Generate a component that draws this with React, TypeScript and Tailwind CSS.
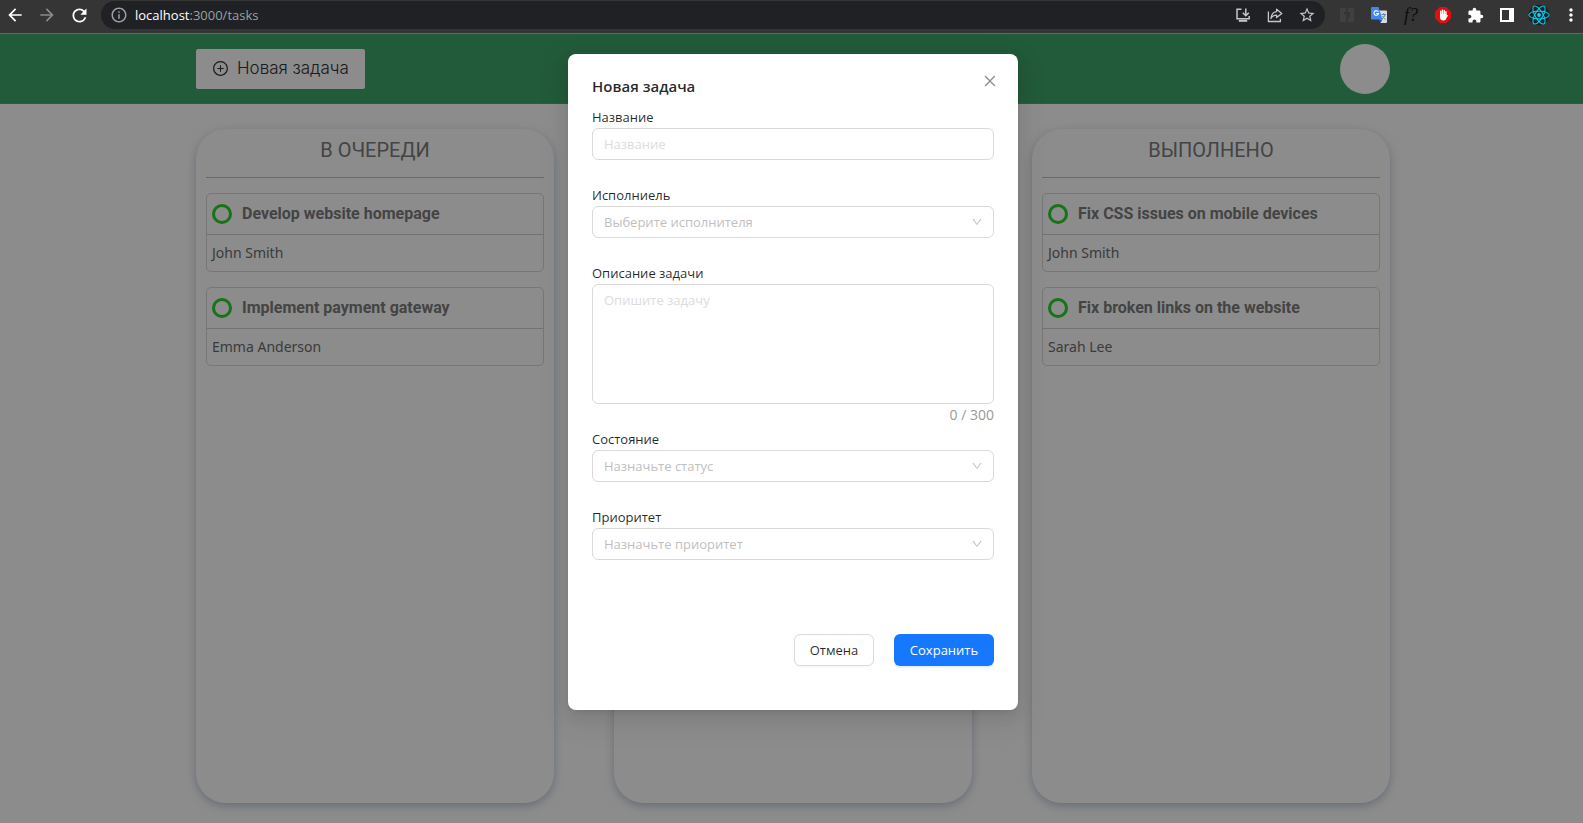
import type { ReactNode } from "react";
import { AiOutlineClose, AiOutlineDown, AiOutlinePlusCircle } from "react-icons/ai";
import { MdArrowBack, MdArrowForward, MdExtension, MdMoreVert, MdOutlineInfo, MdRefresh, MdStarBorder } from "react-icons/md";

function BarIcon({ label, children }: { label: string; children: ReactNode }) {
  return (
    <button type="button" aria-label={label} className="flex h-8 w-8 shrink-0 items-center justify-center">
      {children}
    </button>
  );
}

function InstallIcon() {
  return (
    <svg width="16" height="16" viewBox="0 0 16 16" fill="none" stroke="currentColor" strokeWidth="1.5">
      <path d="M6.500 2.200H2v9.600h12.200V9" />
      <path d="M3.800 13.800h8.400" strokeWidth="2" />
      <path d="M10.800 1.500v7M7.800 5.800l3 3 3-3" />
    </svg>
  );
}

function ShareIcon() {
  return (
    <svg width="16" height="16" viewBox="0 0 16 16" fill="none" stroke="currentColor" strokeWidth="1.3">
      <path d="M1.400 4.500v10h12v-2.800" />
      <path d="M9.600 2.200 14.800 6.400 9.600 10.600V8.200C7 8.200 5.200 9.200 4 11.400 4.300 7.500 6.200 5 9.600 4.600Z" strokeLinejoin="round" />
    </svg>
  );
}

function TranslateIcon() {
  return (
    <svg width="16" height="16" viewBox="0 0 16 16">
      <path d="M6 3.500h9a1 1 0 0 1 1 1V15a1 1 0 0 1-1 1H9.500Z" fill="#d8dce0" />
      <path d="M1 0h6.500l4 12.500H1a1 1 0 0 1-1-1V1a1 1 0 0 1 1-1Z" fill="#4286f5" />
      <path d="M8 12.500h3.500L9.500 16Z" fill="#2451c4" />
      <path d="M7.300 4.900A2.300 2.300 0 1 0 7.500 6.500H5.200" stroke="#fff" strokeWidth="1.100" fill="none" />
      <path d="M10.500 7.500H15M12.700 6.300v1.200M14 7.500c-.4 2-1.600 3.600-3 4.500M11.500 9c.8 1.700 1.800 2.700 3.200 3.500" stroke="#5f7d8c" strokeWidth=".9" fill="none" />
    </svg>
  );
}

function BlockIcon() {
  return (
    <svg width="16" height="16" viewBox="0 0 16 16">
      <path d="M4.800 0h6.400L16 4.800v6.400L11.200 16H4.800L0 11.200V4.800Z" fill="#e40d12" />
      <path d="M5.700 8.800V4.200M7.400 7.500V3.200M9.200 7.500V3.400M10.900 8.500V4.800" stroke="#fff" strokeWidth="1.400" strokeLinecap="round" />
      <path d="M5 7h6.600v3c0 2-1.200 3.400-3.200 3.400C6 13.400 5 12 5 10.200ZM10.800 10.200l1.600-2.100.6.500-2.200 3.400Z" fill="#fff" />
    </svg>
  );
}

function ReactIcon() {
  return (
    <svg width="22" height="22" viewBox="-11 -11 22 22" fill="none" stroke="#00d8ff" strokeWidth="1">
      <circle r="10.500" fill="#202020" stroke="none" />
      <circle r="1.900" fill="#00d8ff" stroke="none" />
      <ellipse rx="10.200" ry="3.900" />
      <ellipse rx="10.200" ry="3.900" transform="rotate(60)" />
      <ellipse rx="10.200" ry="3.900" transform="rotate(120)" />
    </svg>
  );
}

function BrowserBar() {
  return (
    <div className="flex h-[34px] shrink-0 items-start border-b border-[#666666] bg-[#353535] text-white">
      <div className="flex h-[30px] items-center pr-[2px]">
        <button type="button" aria-label="Back" className="flex w-8 justify-center pr-[2px]">
          <MdArrowBack size={20} />
        </button>
        <button type="button" aria-label="Forward" className="flex w-8 justify-center pr-[2px] text-[#8a8a8a]">
          <MdArrowForward size={20} />
        </button>
        <button type="button" aria-label="Reload" className="flex w-8 justify-center pr-[2px]">
          <MdRefresh size={21} />
        </button>
      </div>
      <div className="ml-[3px] mt-px flex h-7 flex-1 items-center rounded-full bg-[#202124] pl-[9px] pr-[2px]">
        <MdOutlineInfo size={18} className="mr-[7px] shrink-0 text-[#9aa0a6]" />
        <div className="flex-1 font-['Open_Sans',sans-serif] text-[13px] leading-5 text-[#9aa0a6]">
          <span className="text-white">localhost</span>:3000/tasks
        </div>
        <div className="flex text-[#c4c7c9]">
          <BarIcon label="Install"><InstallIcon /></BarIcon>
          <BarIcon label="Share"><ShareIcon /></BarIcon>
          <BarIcon label="Bookmark"><MdStarBorder size={18} /></BarIcon>
        </div>
      </div>
      <div className="ml-[6px] flex h-[30px] items-center">
        <BarIcon label="Brackets">
          <svg width="14" height="14" viewBox="0 0 14 14">
            <path d="M0 0h6v4H4v2h2v8H0ZM8 0h6v14H8v-4h2V4H8Z" fill="#404040" />
          </svg>
        </BarIcon>
        <BarIcon label="Translate"><TranslateIcon /></BarIcon>
        <button type="button" className="w-8 text-center font-['Liberation_Serif',serif] text-lg leading-5 text-[#0c0c0c] italic">
          f?
        </button>
        <BarIcon label="Blocker"><BlockIcon /></BarIcon>
        <BarIcon label="Extensions"><MdExtension size={17} /></BarIcon>
        <BarIcon label="Side panel">
          <svg width="14" height="14" viewBox="0 0 14 14">
            <path fillRule="evenodd" d="M0 0h14v14H0ZM2 2v10h7V2Z" fill="#fff" />
          </svg>
        </BarIcon>
        <BarIcon label="React Developer Tools"><ReactIcon /></BarIcon>
        <button type="button" aria-label="Menu" className="flex w-7 justify-center pl-1">
          <MdMoreVert size={20} />
        </button>
      </div>
    </div>
  );
}

type Task = { title: string; assignee: string };

function TaskCard({ title, assignee }: Task) {
  return (
    <article className="rounded-[5px] border border-[#d9d9d9]">
      <div className="flex h-[41px] items-center gap-[10px] border-b border-[#d0d0d0] px-[5px]">
        <span className="h-5 w-5 rounded-full border-3 border-[#2ccf2c]" />
        <h3 className="font-[Roboto,sans-serif] text-base font-bold text-[#7c7c7c]">{title}</h3>
      </div>
      <p className="px-[5px] py-2 font-['Noto_Sans',sans-serif] text-sm leading-5 text-[#6c6c6c]">{assignee}</p>
    </article>
  );
}

function Column({ title, tasks = [] }: { title?: string; tasks?: Task[] }) {
  return (
    <section className="flex flex-1 flex-col gap-[15px] rounded-[30px] bg-white px-[10px] pt-2 shadow-[0_3px_10px_0_rgba(60,90,140,0.35)]">
      {title && (
        <h2 className="h-[41px] border-b border-[#c0c0c0] text-center font-[Roboto,sans-serif] text-xl leading-[26px] text-[#7c7c7c]">
          {title}
        </h2>
      )}
      {tasks.map((task) => (
        <TaskCard key={task.title} {...task} />
      ))}
    </section>
  );
}

const queued: Task[] = [
  { title: "Develop website homepage", assignee: "John Smith" },
  { title: "Implement payment gateway", assignee: "Emma Anderson" },
];

const done: Task[] = [
  { title: "Fix CSS issues on mobile devices", assignee: "John Smith" },
  { title: "Fix broken links on the website", assignee: "Sarah Lee" },
];

function SelectField({ id, label, placeholder }: { id: string; label: string; placeholder: string }) {
  return (
    <div className="mb-6">
      <label htmlFor={id} className="block">{label}</label>
      <div className="grid items-center">
        <select
          id={id}
          defaultValue=""
          className="col-start-1 row-start-1 h-8 w-full appearance-none rounded-md border border-[#d9d9d9] bg-white px-[11px] text-[#bfbfbf]"
        >
          <option value="">{placeholder}</option>
        </select>
        <AiOutlineDown size={12} className="pointer-events-none col-start-1 row-start-1 mr-[11px] justify-self-end text-[#bfbfbf]" />
      </div>
    </div>
  );
}

function TaskModal() {
  return (
    <div
      role="dialog"
      aria-labelledby="modal-title"
      className="w-[450px] self-start rounded-lg bg-white px-6 pt-5 pb-11 font-['Open_Sans','Noto_Sans',sans-serif] text-[13px] leading-[22px] text-black/85 shadow-[0_6px_16px_0_rgba(0,0,0,0.08),0_3px_6px_-4px_rgba(0,0,0,0.12),0_9px_28px_8px_rgba(0,0,0,0.05)]"
    >
      <div className="mb-2 flex h-6 items-center justify-between">
        <h1 id="modal-title" className="text-[15px] leading-6 font-semibold">Новая задача</h1>
        <button type="button" aria-label="Закрыть" className="-mr-1 mb-[10px] text-[#8c8c8c]">
          <AiOutlineClose size={16} />
        </button>
      </div>
      <form>
        <div className="mb-6">
          <label htmlFor="name" className="block">Название</label>
          <input id="name" placeholder="Название" className="block h-8 w-full rounded-md border border-[#d9d9d9] px-[11px] placeholder:text-[#dcdcdc]" />
        </div>
        <SelectField id="assignee" label="Исполниель" placeholder="Выберите исполнителя" />
        <div className="mb-[2px]">
          <label htmlFor="description" className="block">Описание задачи</label>
          <textarea id="description" placeholder="Опишите задачу" className="block h-[120px] w-full resize-none rounded-md border border-[#d9d9d9] px-[11px] py-1 placeholder:text-[#dcdcdc]" />
          <p className="text-right text-sm leading-[22px] text-[#999]">0 / 300</p>
        </div>
        <SelectField id="status" label="Состояние" placeholder="Назначьте статус" />
        <SelectField id="priority" label="Приоритет" placeholder="Назначьте приоритет" />
        <div className="mt-[74px] flex justify-end gap-5">
          <button type="button" className="h-8 w-20 rounded-md border border-[#d9d9d9] shadow-[0_2px_0_rgba(0,0,0,0.02)]">Отмена</button>
          <button type="submit" className="h-8 w-[100px] rounded-md bg-[#1677ff] font-medium text-white shadow-[0_2px_0_rgba(5,145,255,0.1)]">Сохранить</button>
        </div>
      </form>
    </div>
  );
}

export default function App() {
  return (
    <div className="flex min-h-screen flex-col">
      <BrowserBar />
      <div className="relative flex flex-1 flex-col bg-white">
        <header className="flex h-[70px] justify-center border-b border-[#888] bg-[#3fa769] pl-[3px]">
          <div className="flex w-full max-w-[1194px] items-center justify-between">
            <button type="button" className="flex h-10 items-center gap-2 rounded-[2px] bg-white px-4 font-[Inter,sans-serif] text-[17px] font-light text-[#333]">
              <AiOutlinePlusCircle size={17} />
              Новая задача
            </button>
            <span className="h-[50px] w-[50px] rounded-full bg-white" />
          </div>
        </header>
        <main className="flex flex-1 justify-center pt-[25px] pb-5 pl-[3px]">
          <div className="flex w-full max-w-[1194px] gap-[60px]">
            <Column title="В ОЧЕРЕДИ" tasks={queued} />
            <Column />
            <Column title="ВЫПОЛНЕНО" tasks={done} />
          </div>
        </main>
        <div className="absolute inset-0 flex justify-center bg-black/45 pt-5 pl-[3px]">
          <TaskModal />
        </div>
      </div>
    </div>
  );
}
